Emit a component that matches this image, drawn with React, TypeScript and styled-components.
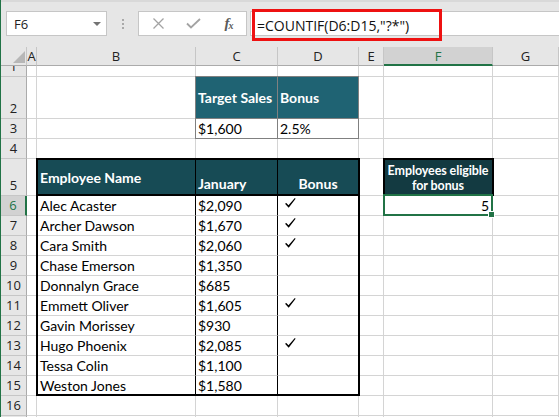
import React from 'react';
import styled, { createGlobalStyle, css } from 'styled-components';

const GRID = '#d4d4d4';
const GREEN = '#217346';
const HEAD_BG = '#e6e6e6';
const HEAD_LINE = '#c6c6c6';
const CELL_FONT = 'Lato, "Open Sans", "Liberation Sans", sans-serif';
const UI_FONT = '"Open Sans", "Noto Sans", "Liberation Sans", sans-serif';
const TEAL_1 = '#1f6373';
const TEAL_2 = '#174b55';
const TEAL_3 = '#133a41';

const GlobalStyle = createGlobalStyle`
  html, body { margin: 0; padding: 0; background: #ffffff; }
  body { overflow: hidden; }
`;

const Window = styled.div`
  width: 559px;
  height: 417px;
  overflow: hidden;
  box-sizing: border-box;
  border-left: 1px solid ${GREEN};
  background: #ffffff;
`;

/* ---------- formula bar ---------- */

const FormulaBar = styled.div`
  height: 47px;
  box-sizing: border-box;
  background: ${HEAD_BG};
  border-top: 2px solid #d9d9d9;
  padding-top: 9px;
  display: flex;
  align-items: flex-start;
`;

const NameBox = styled.div`
  box-sizing: border-box;
  width: 101px;
  height: 25px;
  margin-left: 5px;
  background: #ffffff;
  border: 1px solid ${HEAD_LINE};
  display: flex;
  align-items: center;
  justify-content: space-between;
  padding: 0 5px 0 7px;
  font: 13px ${UI_FONT};
  color: #222222;
`;

const Caret = styled.span`
  width: 0;
  height: 0;
  border-left: 4px solid transparent;
  border-right: 4px solid transparent;
  border-top: 4px solid #737373;
`;

const Grip = styled.div`
  width: 31px;
  height: 25px;
  display: flex;
  flex-direction: column;
  align-items: center;
  justify-content: center;
  gap: 2px;
`;

const GripDot = styled.span`
  width: 2px;
  height: 2px;
  background: #a9a9a9;
`;

const ButtonBox = styled.div`
  box-sizing: border-box;
  width: 109px;
  height: 25px;
  background: #ffffff;
  border: 1px solid ${HEAD_LINE};
  display: flex;
  align-items: center;
  padding-left: 2px;
`;

const IconSlot = styled.span`
  width: 35px;
  height: 23px;
  display: flex;
  align-items: center;
  justify-content: center;
  color: #9f9f9f;
`;

const FxLabel = styled.span`
  font: italic bold 15px "Liberation Serif", "DejaVu Serif", serif;
  color: #5b5b5b;
  letter-spacing: -1px;
  & sub {
    font-size: 10px;
    vertical-align: -1px;
  }
`;

const FormulaField = styled.div`
  flex: 1;
  box-sizing: border-box;
  height: 25px;
  margin-left: 3px;
  background: #ffffff;
  border: 1px solid ${HEAD_LINE};
  border-right: none;
  display: flex;
  align-items: flex-start;
`;

const Highlight = styled.div`
  box-sizing: border-box;
  width: 190px;
  height: 32px;
  margin: -3px 0 0 1px;
  border: 3px solid #ee1111;
  display: flex;
  align-items: center;
  padding-left: 2px;
  font: 14px ${UI_FONT};
  color: #111111;
  white-space: nowrap;
`;

/* ---------- sheet ---------- */

const Sheet = styled.div`
  display: grid;
  grid-template-columns: 26px 10px 159px 82px 81px 25px 109px 66px;
  grid-template-rows: 19px 11px 42px 20px 20px 37px repeat(12, 20px);
`;

const Corner = styled.div`
  grid-row: 1;
  grid-column: 1;
  box-sizing: border-box;
  background: ${HEAD_BG};
  border-right: 1px solid ${HEAD_LINE};
  border-bottom: 1px solid #ababab;
  display: flex;
  align-items: flex-end;
  justify-content: flex-end;
  padding: 0 1px 2px 0;
`;

const CornerTriangle = styled.span`
  width: 0;
  height: 0;
  border-left: 12px solid transparent;
  border-bottom: 12px solid #b7b7b7;
`;

const ColHead = styled.div<{ $c: number; $sel?: boolean }>`
  grid-row: 1;
  grid-column: ${(p) => p.$c};
  box-sizing: border-box;
  display: flex;
  align-items: center;
  justify-content: center;
  background: ${(p) => (p.$sel ? '#d2d2d2' : HEAD_BG)};
  color: ${(p) => (p.$sel ? GREEN : '#222222')};
  border-right: 1px solid ${HEAD_LINE};
  border-bottom: ${(p) => (p.$sel ? `2px solid ${GREEN}` : '1px solid #ababab')};
  font: 13px ${UI_FONT};
  overflow: visible;
`;

const RowHead = styled.div<{ $r: number; $sel?: boolean }>`
  grid-row: ${(p) => p.$r};
  grid-column: 1;
  box-sizing: border-box;
  display: flex;
  align-items: flex-end;
  justify-content: center;
  background: ${(p) => (p.$sel ? '#d2d2d2' : HEAD_BG)};
  color: ${(p) => (p.$sel ? GREEN : '#222222')};
  border-right: ${(p) => (p.$sel ? `2px solid ${GREEN}` : '1px solid #ababab')};
  border-bottom: 1px solid ${HEAD_LINE};
  font: 13px/19px ${UI_FONT};
  overflow: hidden;
`;

type CellProps = {
  $r: number;
  $c: number;
  $bg?: string;
  $fg?: string;
  $bold?: boolean;
  $h?: 'flex-start' | 'center' | 'flex-end';
  $v?: 'flex-start' | 'center' | 'flex-end';
  $rc?: string;
  $bc?: string;
  $pl?: number;
  $pr?: number;
  $pb?: number;
  $pt?: number;
};

const Cell = styled.div<CellProps>`
  grid-row: ${(p) => p.$r};
  grid-column: ${(p) => p.$c};
  box-sizing: border-box;
  min-width: 0;
  display: flex;
  justify-content: ${(p) => p.$h ?? 'flex-start'};
  align-items: ${(p) => p.$v ?? 'flex-end'};
  padding: ${(p) => `${p.$pt ?? 0}px ${p.$pr ?? 2}px ${p.$pb ?? 0}px ${p.$pl ?? 2}px`};
  background: ${(p) => p.$bg ?? '#ffffff'};
  color: ${(p) => p.$fg ?? '#000000'};
  border-right: 1px solid ${(p) => p.$rc ?? GRID};
  border-bottom: 1px solid ${(p) => p.$bc ?? GRID};
  font: ${(p) => (p.$bold ? 'bold ' : '')}14px/19px ${CELL_FONT};
  white-space: nowrap;
`;

const TwoLine = styled.span`
  font: bold 12.5px/15px ${CELL_FONT};
  text-align: center;
  white-space: nowrap;
  letter-spacing: -0.1px;
`;

const Outline = styled.div<{ $r1: number; $r2: number; $c1: number; $c2: number; $w: number; $color: string }>`
  grid-row: ${(p) => `${p.$r1} / ${p.$r2 + 1}`};
  grid-column: ${(p) => `${p.$c1} / ${p.$c2 + 1}`};
  ${(p) => css`
    margin: -1px ${-(p.$w - 1)}px 0 -1px;
    border: ${p.$w}px solid ${p.$color};
  `}
  position: relative;
  z-index: 2;
  pointer-events: none;
`;

const Selection = styled.div<{ $r: number; $c: number }>`
  grid-row: ${(p) => p.$r};
  grid-column: ${(p) => p.$c};
  margin: -2px 0 0 -1px;
  border: 2px solid ${GREEN};
  position: relative;
  z-index: 3;
  pointer-events: none;
`;

const FillHandle = styled.span`
  position: absolute;
  right: -4px;
  bottom: -4px;
  width: 5px;
  height: 5px;
  background: ${GREEN};
  border: 1px solid #ffffff;
`;

/* ---------- icons ---------- */

const Check = () => (
  <svg width="11" height="10" viewBox="0 0 11 10">
    <polygon points="0,5.8 1.3,4.9 3.5,7.3 9.8,0 10.6,0.7 3.7,9.8" fill="#000000" />
  </svg>
);

const CancelIcon = () => (
  <svg width="13" height="13" viewBox="0 0 13 13">
    <path d="M1.5 1.5 L11.5 11.5 M11.5 1.5 L1.5 11.5" stroke="#a3a3a3" strokeWidth="1.3" fill="none" />
  </svg>
);

const EnterIcon = () => (
  <svg width="15" height="11" viewBox="0 0 15 11">
    <path d="M1 5.5 L5 9.5 L14 1" stroke="#a3a3a3" strokeWidth="1.8" fill="none" />
  </svg>
);

/* ---------- data ---------- */

const employees: [string, string, boolean][] = [
  ['Alec Acaster', '$2,090', true],
  ['Archer Dawson', '$1,670', true],
  ['Cara Smith', '$2,060', true],
  ['Chase Emerson', '$1,350', false],
  ['Donnalyn Grace', '$685', false],
  ['Emmett Oliver', '$1,605', true],
  ['Gavin Morissey', '$930', false],
  ['Hugo Phoenix', '$2,085', true],
  ['Tessa Colin', '$1,100', false],
  ['Weston Jones', '$1,580', false],
];

const COLS = ['A', 'B', 'C', 'D', 'E', 'F', 'G'];
const ROW_COUNT = 16;

// grid row index for a sheet row number
const gr = (n: number) => n + 1;
// grid column index for a column letter
const gc = (l: string) => COLS.indexOf(l) + 2;

export default function App() {
  const cells: React.ReactNode[] = [];
  const filled = new Set<string>();

  const add = (key: string, node: React.ReactNode) => {
    filled.add(key);
    cells.push(node);
  };

  // Row 2 & 3: target block
  add('C2', <Cell key="C2" $r={gr(2)} $c={gc('C')} $bg={TEAL_1} $fg="#fff" $bold $v="center" $rc="#808080" $bc="#808080">Target Sales</Cell>);
  add('D2', <Cell key="D2" $r={gr(2)} $c={gc('D')} $bg={TEAL_1} $fg="#fff" $bold $v="center" $bc="#808080">Bonus</Cell>);
  add('C3', <Cell key="C3" $r={gr(3)} $c={gc('C')} $rc="#808080">$1,600</Cell>);
  add('D3', <Cell key="D3" $r={gr(3)} $c={gc('D')}>2.5%</Cell>);

  // Row 5: table headers
  add('B5', <Cell key="B5" $r={gr(5)} $c={gc('B')} $bg={TEAL_2} $fg="#fff" $bold $v="center" $pl={3} $rc="#000">Employee Name</Cell>);
  add('C5', <Cell key="C5" $r={gr(5)} $c={gc('C')} $bg={TEAL_2} $fg="#fff" $bold $pb={2} $rc="#000">January</Cell>);
  add('D5', <Cell key="D5" $r={gr(5)} $c={gc('D')} $bg={TEAL_2} $fg="#fff" $bold $pb={2} $h="center">Bonus</Cell>);
  add('F5', (
    <Cell key="F5" $r={gr(5)} $c={gc('F')} $bg={TEAL_3} $fg="#fff" $h="center" $v="center" $pl={0} $pr={0} $pt={1}>
      <TwoLine>Employees eligible<br />for bonus</TwoLine>
    </Cell>
  ));
  add('F6', <Cell key="F6" $r={gr(6)} $c={gc('F')} $h="flex-end" $pr={3}>5</Cell>);

  employees.forEach(([name, amount, bonus], i) => {
    const row = 6 + i;
    add(`B${row}`, <Cell key={`B${row}`} $r={gr(row)} $c={gc('B')} $pl={3} $rc="#000">{name}</Cell>);
    add(`C${row}`, <Cell key={`C${row}`} $r={gr(row)} $c={gc('C')} $rc="#000">{amount}</Cell>);
    add(`D${row}`, (
      <Cell key={`D${row}`} $r={gr(row)} $c={gc('D')} $v="flex-start" $pl={7} $pt={2}>
        {bonus ? <Check /> : null}
      </Cell>
    ));
  });

  // empty cells (one extra blank row below 16 shows its top edge)
  for (let n = 1; n <= ROW_COUNT + 1; n++) {
    COLS.forEach((l) => {
      const key = `${l}${n}`;
      if (!filled.has(key)) {
        cells.push(<Cell key={key} $r={gr(n)} $c={gc(l)} />);
      }
    });
  }

  return (
    <>
      <GlobalStyle />
      <Window>
        <FormulaBar>
          <NameBox>
            <span>F6</span>
            <Caret />
          </NameBox>
          <Grip>
            <GripDot />
            <GripDot />
            <GripDot />
          </Grip>
          <ButtonBox>
            <IconSlot><CancelIcon /></IconSlot>
            <IconSlot><EnterIcon /></IconSlot>
            <IconSlot><FxLabel>f<sub>x</sub></FxLabel></IconSlot>
          </ButtonBox>
          <FormulaField>
            <Highlight>=COUNTIF(D6:D15,"?*")</Highlight>
          </FormulaField>
        </FormulaBar>
        <Sheet>
          <Corner><CornerTriangle /></Corner>
          {COLS.map((l) => (
            <ColHead key={l} $c={gc(l)} $sel={l === 'F'}>{l}</ColHead>
          ))}
          {Array.from({ length: ROW_COUNT + 1 }, (_, i) => i + 1).map((n) => (
            <RowHead key={n} $r={gr(n)} $sel={n === 6}>{n <= ROW_COUNT ? n : ''}</RowHead>
          ))}
          {cells}
          <Outline $r1={gr(2)} $r2={gr(3)} $c1={gc('C')} $c2={gc('D')} $w={1} $color="#808080" />
          <Outline $r1={gr(5)} $r2={gr(15)} $c1={gc('B')} $c2={gc('D')} $w={2} $color="#000" />
          <Outline $r1={gr(5)} $r2={gr(5)} $c1={gc('B')} $c2={gc('D')} $w={2} $color="#000" />
          <Outline $r1={gr(5)} $r2={gr(5)} $c1={gc('F')} $c2={gc('F')} $w={2} $color="#000" />
          <Selection $r={gr(6)} $c={gc('F')}>
            <FillHandle />
          </Selection>
        </Sheet>
      </Window>
    </>
  );
}
